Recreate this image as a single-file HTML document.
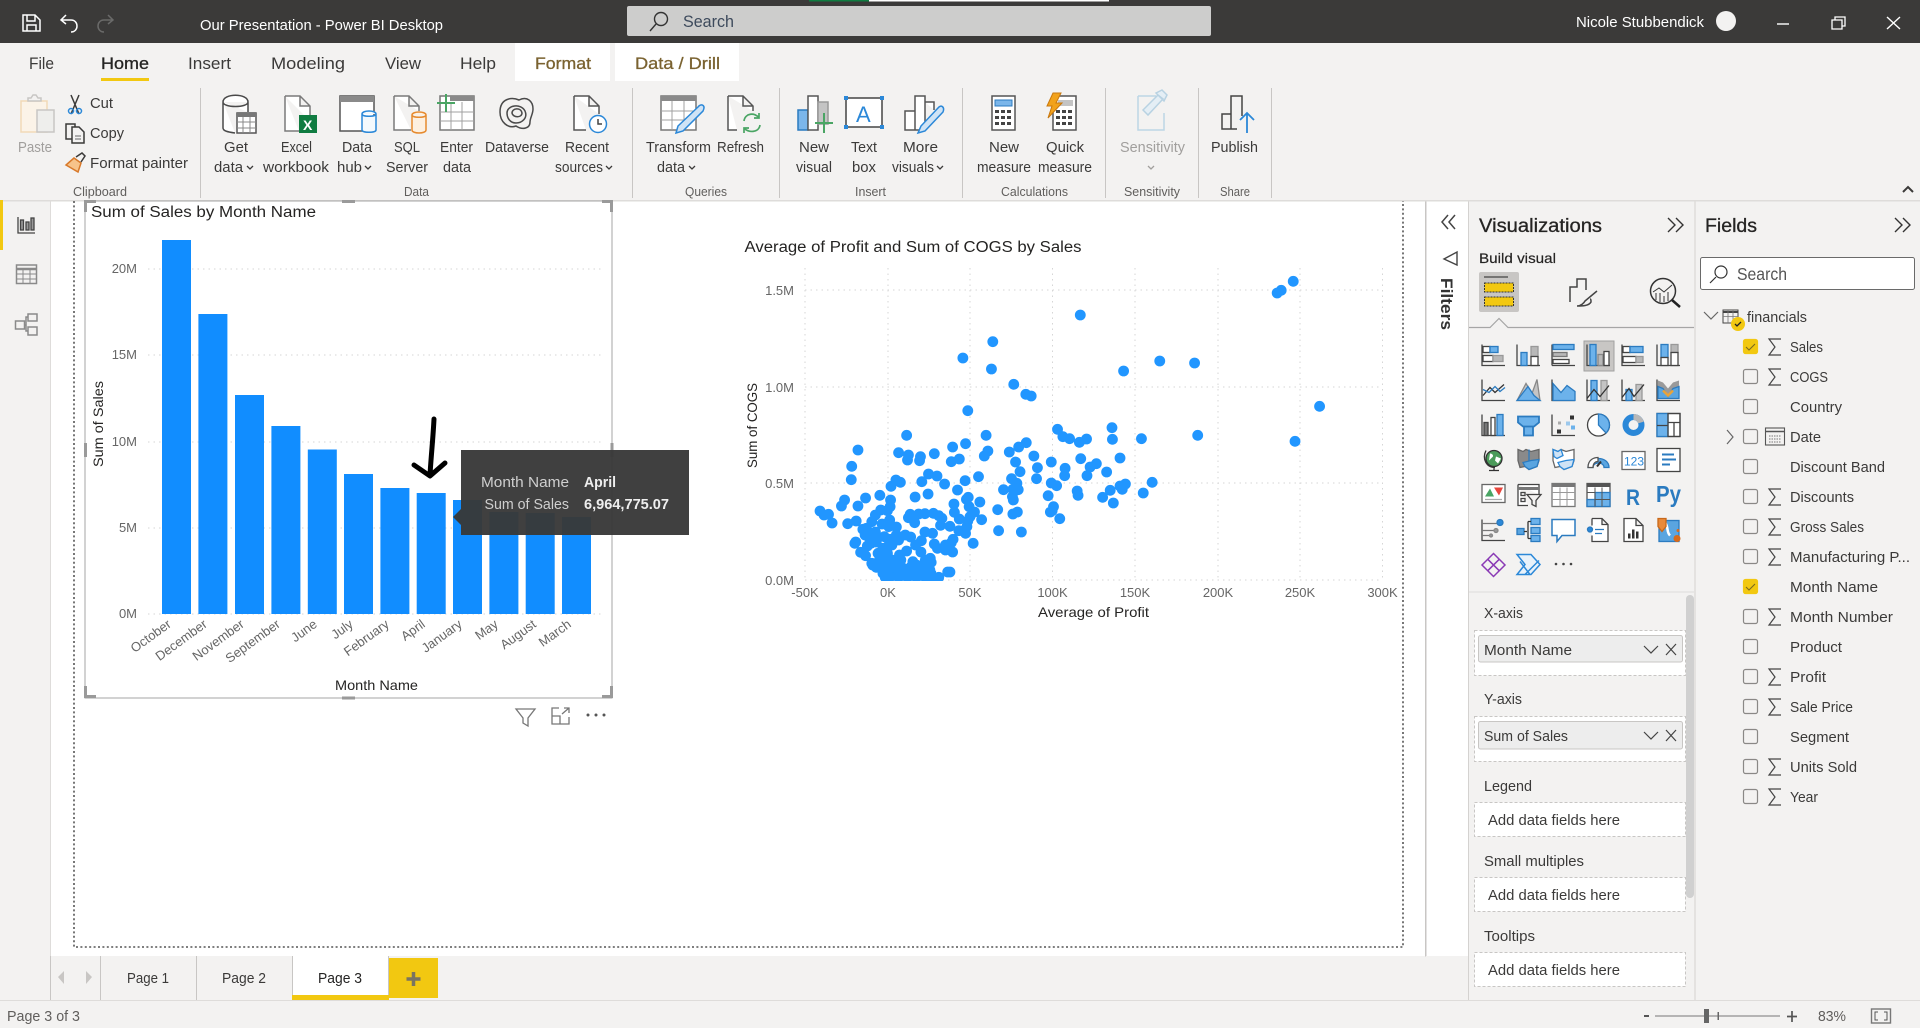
<!DOCTYPE html>
<html><head><meta charset="utf-8"><title>Our Presentation - Power BI Desktop</title>
<style>
html,body{margin:0;padding:0;background:#fff;width:1920px;height:1028px;overflow:hidden}
svg{display:block;font-family:"Liberation Sans",sans-serif}
.r{font-size:15px;fill:#3b3a39}
.g{font-size:13px;fill:#605e5c}
.tab{font-size:17px;fill:#3b3a39}
.f{font-size:15px;fill:#3b3a39}
.a{font-size:13px;fill:#666}
.d{font-size:15px;fill:#252423}
.ln{fill:none;stroke:#404040;stroke-width:1.5}
.gr{stroke:#d6d6d6;stroke-width:1;stroke-dasharray:1.5 4;fill:none}
.h{fill:#9a9a9a}
.cb{fill:#f3f2f1;stroke:#8a8886;stroke-width:1.2}
</style></head><body>
<svg width="1920" height="1028" viewBox="0 0 1920 1028" xmlns="http://www.w3.org/2000/svg">
<rect width="1920" height="1028" fill="#fff"/>
<!-- title bar -->
<rect width="1920" height="43" fill="#3b3a39"/>
<rect x="809" width="60" height="1.5" fill="#107c41"/><rect x="869" width="240" height="1.5" fill="#fff"/>
<g fill="none" stroke="#fff" stroke-width="1.5">
<path d="M23 15h12l5 5v11H23zM27 15v6h8v-6M27 31v-6h9v6"/>
<path d="M66 15l-5 5 5 4M61 20h10c8 0 8 12 0 12" />
<path d="M108 15l5 5-5 4M113 20h-9c-8 0-8 12 0 12" stroke="#6a6a69"/>
</g>
<text x="200" y="30" font-size="15" fill="#fff" textLength="243" lengthAdjust="spacingAndGlyphs">Our Presentation - Power BI Desktop</text>
<rect x="627" y="6" width="584" height="30" rx="2" fill="#cdcdcc"/>
<circle cx="661" cy="19" r="6.5" fill="none" stroke="#333" stroke-width="1.4"/><path d="M656 24l-6 7" stroke="#333" stroke-width="1.4"/>
<text x="683" y="27" font-size="17" fill="#3d4a5c" textLength="51" lengthAdjust="spacingAndGlyphs">Search</text>
<text x="1576" y="27" font-size="15" fill="#fff" textLength="128" lengthAdjust="spacingAndGlyphs">Nicole Stubbendick</text>
<circle cx="1726" cy="21" r="10" fill="#f3f2f1"/>
<path d="M1777 24h12" stroke="#fff" stroke-width="1.4"/>
<path d="M1835 20v-3h10v9h-3M1832 20h10v9h-10z" fill="none" stroke="#fff" stroke-width="1.3"/>
<path d="M1887 17l13 12M1900 17l-13 12" stroke="#fff" stroke-width="1.4"/>
<!-- ribbon -->
<rect y="43" width="1920" height="157" fill="#f3f2f1"/>
<rect y="200" width="1920" height="1.5" fill="#dedcda"/>
<rect x="515" y="43" width="95" height="38" fill="#fff"/>
<rect x="615" y="43" width="124" height="38" fill="#fff"/>
<text class="tab" x="29" y="69" textLength="25" lengthAdjust="spacingAndGlyphs">File</text>
<text class="tab" x="101" y="69" textLength="48" lengthAdjust="spacingAndGlyphs" style="fill:#252423;stroke:#252423;stroke-width:.3">Home</text>
<rect x="101" y="78" width="48" height="3" fill="#f2c811"/>
<text class="tab" x="188" y="69" textLength="43" lengthAdjust="spacingAndGlyphs">Insert</text>
<text class="tab" x="271" y="69" textLength="74" lengthAdjust="spacingAndGlyphs">Modeling</text>
<text class="tab" x="385" y="69" textLength="36" lengthAdjust="spacingAndGlyphs">View</text>
<text class="tab" x="460" y="69" textLength="36" lengthAdjust="spacingAndGlyphs">Help</text>
<text class="tab" x="535" y="69" textLength="56" lengthAdjust="spacingAndGlyphs" style="fill:#7a6230;stroke:#7a6230;stroke-width:.3">Format</text>
<text class="tab" x="635" y="69" textLength="85" lengthAdjust="spacingAndGlyphs" style="fill:#7a6230;stroke:#7a6230;stroke-width:.3">Data / Drill</text>
<g fill="#c8c6c4"><rect x="200" y="88" width="1" height="110"/><rect x="632" y="88" width="1" height="110"/><rect x="779" y="88" width="1" height="110"/><rect x="962" y="88" width="1" height="110"/><rect x="1105" y="88" width="1" height="110"/><rect x="1198" y="88" width="1" height="110"/><rect x="1271" y="88" width="1" height="110"/></g>
<!-- ribbon labels -->
<g>
<text class="r" x="18" y="152" textLength="34" lengthAdjust="spacingAndGlyphs" style="fill:#a19f9d">Paste</text>
<text class="r" x="90" y="108" textLength="23" lengthAdjust="spacingAndGlyphs">Cut</text>
<text class="r" x="90" y="138" textLength="34" lengthAdjust="spacingAndGlyphs">Copy</text>
<text class="r" x="90" y="168" textLength="98" lengthAdjust="spacingAndGlyphs">Format painter</text>
<text class="r" x="224" y="152" textLength="24" lengthAdjust="spacingAndGlyphs">Get</text>
<text class="r" x="214" y="172" textLength="29" lengthAdjust="spacingAndGlyphs">data</text>
<text class="r" x="281" y="152" textLength="31" lengthAdjust="spacingAndGlyphs">Excel</text>
<text class="r" x="263" y="172" textLength="66" lengthAdjust="spacingAndGlyphs">workbook</text>
<text class="r" x="342" y="152" textLength="30" lengthAdjust="spacingAndGlyphs">Data</text>
<text class="r" x="337" y="172" textLength="25" lengthAdjust="spacingAndGlyphs">hub</text>
<text class="r" x="394" y="152" textLength="26" lengthAdjust="spacingAndGlyphs">SQL</text>
<text class="r" x="386" y="172" textLength="42" lengthAdjust="spacingAndGlyphs">Server</text>
<text class="r" x="440" y="152" textLength="33" lengthAdjust="spacingAndGlyphs">Enter</text>
<text class="r" x="443" y="172" textLength="28" lengthAdjust="spacingAndGlyphs">data</text>
<text class="r" x="485" y="152" textLength="64" lengthAdjust="spacingAndGlyphs">Dataverse</text>
<text class="r" x="565" y="152" textLength="44" lengthAdjust="spacingAndGlyphs">Recent</text>
<text class="r" x="555" y="172" textLength="48" lengthAdjust="spacingAndGlyphs">sources</text>
<text class="r" x="646" y="152" textLength="65" lengthAdjust="spacingAndGlyphs">Transform</text>
<text class="r" x="657" y="172" textLength="28" lengthAdjust="spacingAndGlyphs">data</text>
<text class="r" x="717" y="152" textLength="47" lengthAdjust="spacingAndGlyphs">Refresh</text>
<text class="r" x="799" y="152" textLength="30" lengthAdjust="spacingAndGlyphs">New</text>
<text class="r" x="796" y="172" textLength="36" lengthAdjust="spacingAndGlyphs">visual</text>
<text class="r" x="851" y="152" textLength="26" lengthAdjust="spacingAndGlyphs">Text</text>
<text class="r" x="852" y="172" textLength="24" lengthAdjust="spacingAndGlyphs">box</text>
<text class="r" x="903" y="152" textLength="35" lengthAdjust="spacingAndGlyphs">More</text>
<text class="r" x="892" y="172" textLength="42" lengthAdjust="spacingAndGlyphs">visuals</text>
<text class="r" x="989" y="152" textLength="30" lengthAdjust="spacingAndGlyphs">New</text>
<text class="r" x="977" y="172" textLength="54" lengthAdjust="spacingAndGlyphs">measure</text>
<text class="r" x="1046" y="152" textLength="38" lengthAdjust="spacingAndGlyphs">Quick</text>
<text class="r" x="1038" y="172" textLength="54" lengthAdjust="spacingAndGlyphs">measure</text>
<text class="r" x="1120" y="152" textLength="65" lengthAdjust="spacingAndGlyphs" style="fill:#a19f9d">Sensitivity</text>
<text class="r" x="1211" y="152" textLength="47" lengthAdjust="spacingAndGlyphs">Publish</text>
<g class="g">
<text x="73" y="196" textLength="54" lengthAdjust="spacingAndGlyphs">Clipboard</text>
<text x="404" y="196" textLength="25" lengthAdjust="spacingAndGlyphs">Data</text>
<text x="685" y="196" textLength="42" lengthAdjust="spacingAndGlyphs">Queries</text>
<text x="855" y="196" textLength="31" lengthAdjust="spacingAndGlyphs">Insert</text>
<text x="1001" y="196" textLength="67" lengthAdjust="spacingAndGlyphs">Calculations</text>
<text x="1124" y="196" textLength="56" lengthAdjust="spacingAndGlyphs">Sensitivity</text>
<text x="1220" y="196" textLength="30" lengthAdjust="spacingAndGlyphs">Share</text>
</g>
<g fill="none" stroke="#3b3a39" stroke-width="1.3">
<path d="M247 166l3 3 3-3M365 166l3 3 3-3M606 166l3 3 3-3M689 166l3 3 3-3M937 166l3 3 3-3"/>
<path d="M1148 166l3 3 3-3" stroke="#a19f9d"/>
</g>
<path d="M1903 192l5-5 5 5" fill="none" stroke="#3b3a39" stroke-width="2"/>
</g>
<!-- ribbon icons -->
<g fill="none" stroke-width="1.5">
<!-- paste -->
<rect x="21" y="101" width="26" height="31" fill="#fbf3e8" stroke="#f1d9b8"/><path d="M28 101v-3h3l2-3h3l2 3h3v3z" fill="#f3f2f1" stroke="#c8c6c4"/><rect x="37" y="110" width="17" height="22" fill="#eeeeec" stroke="#c8c6c4"/>
<!-- cut -->
<path d="M71 95l8 19M79 95l-8 19" stroke="#3b3a39"/><circle cx="71" cy="110" r="2.5" stroke="#2b88d8" transform="translate(0 1)"/><circle cx="79" cy="110" r="2.5" stroke="#2b88d8" transform="translate(0 1)"/>
<!-- copy -->
<rect x="66" y="124" width="9" height="15" stroke="#3b3a39"/><path d="M72 127h7l5 5v11H72z" fill="#f3f2f1" stroke="#3b3a39"/><path d="M75 136h6M75 139h6" stroke="#666" stroke-width="1"/>
<!-- painter -->
<path d="M66 165l12 7 3-9-7-5z" fill="#f7c38a" stroke="#d8792a"/><path d="M76 157l6-4 3 3-4 6" stroke="#3b3a39"/>
<!-- get data -->
<path d="M223 102c0-9 25-9 25 0v10M223 102v26c0 3 5 4 12 5M223 102c0 6 25 6 25 0" stroke="#4a4a4a" fill="#fff"/>
<rect x="237" y="113" width="19" height="20" fill="#fff" stroke="#555"/><rect x="237" y="113" width="19" height="4" fill="#777" stroke="none"/><path d="M237 122h19M237 128h19M243 117v16M250 117v16" stroke="#888" stroke-width="1"/>
<!-- excel -->
<path d="M285 96h15l10 10v15M299 131h-14V96M300 96v10h10" stroke="#7a7a7a" fill="#fff"/><rect x="299" y="115" width="18" height="18" fill="#107c41" stroke="none"/><text x="303" y="130" font-size="14" font-weight="bold" fill="#fff" stroke="none">X</text>
<!-- data hub -->
<rect x="340" y="96" width="34" height="35" fill="#fff" stroke="#555"/><rect x="340" y="96" width="34" height="6" fill="#8a8a8a" stroke="none"/><path d="M362 114c0-4 14-4 14 0v16c0 3-14 3-14 0zM362 114c0 3 14 3 14 0" fill="#f3f9fd" stroke="#2b88d8"/>
<!-- sql -->
<path d="M394 96h15l10 10v5M411 130h-17V96M409 96v10h10" stroke="#7a7a7a" fill="#fff"/><path d="M412 115c0-4 14-4 14 0v15c0 4-14 4-14 0zM412 115c0 3 14 3 14 0" fill="#fdf0e0" stroke="#e68a2e"/>
<!-- enter data -->
<rect x="440" y="96" width="34" height="34" fill="#fff" stroke="#777"/><rect x="450" y="96" width="24" height="5" fill="#8a8a8a" stroke="none"/><path d="M440 112h34M440 121h34M451 102v28M462 102v28" stroke="#a0a0a0" stroke-width="1"/><path d="M446 94v18M437 103h18" stroke="#4aa564" stroke-width="2"/>
<!-- dataverse -->
<path d="M500 112c0-14 12-15 19-12 8-4 14 1 14 9 0 5-3 9-3 13 0 7-8 8-14 4-8 3-16-4-16-14zM507 113c0-8 14-10 18-2 3 7-3 12-9 12-6 0-9-5-9-10zM512 113c0-5 9-6 10 0 0 5-9 5-10 0z" stroke="#4a4a4a"/>
<!-- recent -->
<path d="M574 96h15l10 10v8M586 130h-12V96M589 96v10h10" stroke="#555" fill="#fff"/><circle cx="598" cy="124" r="8.5" fill="#fff" stroke="#2b88d8"/><path d="M598 119v5h4" stroke="#444"/>
<!-- transform -->
<rect x="661" y="96" width="35" height="34" fill="#fff" stroke="#777"/><rect x="661" y="96" width="35" height="5" fill="#8a8a8a" stroke="none"/><path d="M661 111h35M661 120h35M672 101v29M684 101v29" stroke="#a0a0a0" stroke-width="1"/><path d="M698 107l-20 19-2 7 7-2 20-20c3-6-2-8-5-4z" fill="#cfe3f5" stroke="#2b88d8"/>
<!-- refresh -->
<path d="M728 96h15l10 10v5M737 130h-9V96M743 96v10h10" stroke="#555" fill="#fff"/><path d="M744 121c1-8 11-9 15-3M760 125c-1 8-12 8-16 3M759 113v5h-5M744 133v-5h5" stroke="#4aa564" stroke-width="1.7"/>
<!-- new visual -->
<rect x="798" y="110" width="10" height="20" fill="#7bb6ea" stroke="#2b7bc0"/><rect x="808" y="96" width="10" height="34" fill="#fff" stroke="#555"/><rect x="818" y="102" width="10" height="22" fill="#c4c4c4" stroke="#999"/><path d="M824 113v20M815 123h18" stroke="#4aa564" stroke-width="2"/>
<!-- textbox -->
<rect x="846" y="98" width="36" height="29" fill="#fff" stroke="#444"/><g fill="#2b88d8" stroke="none"><rect x="844" y="96" width="4" height="4"/><rect x="880" y="96" width="4" height="4"/><rect x="844" y="125" width="4" height="4"/><rect x="880" y="125" width="4" height="4"/></g><text x="856" y="122" font-size="22" fill="#2b88d8" stroke="none">A</text>
<!-- more visuals -->
<path d="M905 111h10v19h-10zM915 96h10v34h-10zM925 102h9v8" stroke="#555" fill="#fff"/><path d="M938 108l-17 18-3 7 7-2 18-19c2-5-2-8-5-4z" fill="#cfe3f5" stroke="#2b88d8"/>
<!-- new measure -->
<rect x="992" y="96" width="23" height="34" fill="#fff" stroke="#555"/><rect x="995" y="100" width="17" height="6" fill="#7bb6ea" stroke="#2b7bc0" stroke-width="1"/><g fill="#444" stroke="none"><rect x="995" y="110" width="4" height="3"/><rect x="1001" y="110" width="4" height="3"/><rect x="1007" y="110" width="4" height="3"/><rect x="995" y="116" width="4" height="3"/><rect x="1001" y="116" width="4" height="3"/><rect x="1007" y="116" width="4" height="3"/><rect x="995" y="122" width="4" height="3"/><rect x="1001" y="122" width="4" height="3"/><rect x="1007" y="122" width="4" height="3"/></g>
<!-- quick measure -->
<rect x="1053" y="96" width="23" height="34" fill="#fff" stroke="#555"/><rect x="1058" y="100" width="15" height="6" fill="#c4c4c4" stroke="none"/><g fill="#444" stroke="none"><rect x="1056" y="110" width="4" height="3"/><rect x="1062" y="110" width="4" height="3"/><rect x="1068" y="110" width="4" height="3"/><rect x="1056" y="116" width="4" height="3"/><rect x="1062" y="116" width="4" height="3"/><rect x="1068" y="116" width="4" height="3"/><rect x="1056" y="122" width="4" height="3"/><rect x="1062" y="122" width="4" height="3"/><rect x="1068" y="122" width="4" height="3"/></g><path d="M1053 93h8l-5 10h6l-14 15 4-12h-5z" fill="#f2a21b" stroke="#c8780f" stroke-width="1"/>
<!-- sensitivity -->
<path d="M1138 96h18M1164 113v17h-26V96" stroke="#bcd6e6" fill="#f3f2f1"/><path d="M1143 110l15-15 5 4-15 16z M1156 93l6-3 5 5-3 6z" stroke="#b8d2e2" fill="#e4eef5"/>
<!-- publish -->
<path d="M1222 129v-15h9v15zM1231 114v-18h11v20M1222 129h15" stroke="#444" fill="#f3f2f1"/><path d="M1247 133v-20M1240 120l7-7 7 7" stroke="#2b88d8" stroke-width="1.8"/>
</g>
<!-- left rail -->
<rect y="201.5" width="50" height="798.500" fill="#f3f2f1"/><rect x="50" y="201.5" width="1" height="799" fill="#dedcda"/>
<rect y="200" width="3" height="50" fill="#f2c811"/>
<g fill="none" stroke="#444" stroke-width="1.3"><path d="M18 217v16h17"/><rect x="20.500" y="220" width="3" height="10" fill="#999"/><rect x="26" y="222" width="3" height="8" fill="#999"/><rect x="31" y="218" width="3" height="12" fill="#999"/></g>
<g fill="none" stroke="#8a8a8a" stroke-width="1.5"><rect x="16.500" y="265" width="20" height="18.500"/><path d="M16 269h21" stroke-width="2.5"/><path d="M16 274h21M16 279h21M23 269v15M30 269v15" stroke-width="1"/><rect x="28" y="314" width="9" height="7"/><rect x="28" y="327" width="9" height="8"/><rect x="15.500" y="321" width="9" height="8"/><path d="M24 325h2V317h2M26 325v6h2"/></g>
<!-- page border -->
<path d="M74 201V947H1403V201" fill="none" stroke="#555" stroke-width="1.6" stroke-dasharray="2 2.4"/>
<!-- bar chart -->
<text x="91" y="217" font-size="15.500" fill="#252423" textLength="225" lengthAdjust="spacingAndGlyphs">Sum of Sales by Month Name</text>
<g class="gr"><path d="M148 269H603M148 355H603M148 442H603M148 528H603M148 614H603"/></g>
<g class="a" text-anchor="end"><text x="137" y="273">20M</text><text x="137" y="359">15M</text><text x="137" y="446">10M</text><text x="137" y="532">5M</text><text x="137" y="618">0M</text></g>
<g fill="#118dff">
<rect x="162" y="240" width="29" height="374"/><rect x="198.400" y="314" width="29" height="300"/><rect x="235" y="395" width="29" height="219"/><rect x="271.400" y="426" width="29" height="188"/><rect x="307.800" y="449.500" width="29" height="164.500"/><rect x="344" y="474" width="29" height="140"/><rect x="380.400" y="488" width="29" height="126"/><rect x="416.700" y="493" width="29" height="121"/><rect x="453" y="500" width="29" height="114"/><rect x="489.400" y="512" width="29" height="102"/><rect x="525.700" y="513" width="29" height="101"/><rect x="562" y="517" width="29" height="97"/>
</g>
<g class="a" text-anchor="end">
<text transform="translate(172 626) rotate(-36)">October</text><text transform="translate(208 626) rotate(-36)">December</text><text transform="translate(245 626) rotate(-36)">November</text><text transform="translate(281 626) rotate(-36)">September</text><text transform="translate(318 626) rotate(-36)">June</text><text transform="translate(354 626) rotate(-36)">July</text><text transform="translate(390 626) rotate(-36)">February</text><text transform="translate(426 626) rotate(-36)">April</text><text transform="translate(463 626) rotate(-36)">January</text><text transform="translate(499 626) rotate(-36)">May</text><text transform="translate(537 626) rotate(-36)">August</text><text transform="translate(572 626) rotate(-36)">March</text>
</g>
<text transform="translate(103 467) rotate(-90)" class="d" textLength="86" lengthAdjust="spacingAndGlyphs" style="font-size:14px">Sum of Sales</text>
<text class="d" x="335" y="690" textLength="83" lengthAdjust="spacingAndGlyphs" style="font-size:14px">Month Name</text>
<!-- selection -->
<rect x="85" y="201" width="527" height="497" fill="none" stroke="#a6a6a6" stroke-width="1"/>
<g class="h">
<path d="M84 200h12v3h-9v9h-3zM602 200h11v12h-3v-9h-8zM84 686h3v9h9v3H84zM613 686v12h-11v-3h8v-9z"/>
<rect x="342" y="200" width="13" height="3"/><rect x="342" y="696.500" width="13" height="3"/><rect x="84" y="443" width="3" height="14"/><rect x="610.500" y="443" width="3" height="14"/>
</g>
<!-- arrow -->
<path d="M434 419c-1 20-3 38-4 56M414 465l16 11 15-13" fill="none" stroke="#000" stroke-width="5" stroke-linecap="round" stroke-linejoin="round"/>
<!-- tooltip -->
<path d="M461 450H689V535H461V525L453 517L461 509Z" fill="#383838" fill-opacity=".96"/>
<text x="481" y="487" font-size="14.500" fill="#cfcfcf" textLength="88" lengthAdjust="spacingAndGlyphs">Month Name</text>
<text x="484.500" y="509" font-size="14.500" fill="#cfcfcf" textLength="84.500" lengthAdjust="spacingAndGlyphs">Sum of Sales</text>
<text x="584" y="487" font-size="14.500" font-weight="bold" fill="#eee" textLength="32" lengthAdjust="spacingAndGlyphs">April</text>
<text x="584" y="509" font-size="14.500" font-weight="bold" fill="#eee" textLength="85" lengthAdjust="spacingAndGlyphs">6,964,775.07</text>
<!-- visual header -->
<path d="M516 709h19l-7 9v8l-5-3v-5z" fill="none" stroke="#777" stroke-width="1.3"/>
<path d="M559 708h-7v16h17v-7M552 716h8v8M562 714l7-6M564 708h5v5" fill="none" stroke="#777" stroke-width="1.3"/>
<g fill="#555"><circle cx="588" cy="715" r="1.500"/><circle cx="596" cy="715" r="1.500"/><circle cx="604" cy="715" r="1.500"/></g>
<!-- scatter -->
<text x="744.500" y="252" font-size="15.500" fill="#252423" textLength="337" lengthAdjust="spacingAndGlyphs">Average of Profit and Sum of COGS by Sales</text>
<g class="gr"><path d="M805 290H1382M805 387H1382M805 483H1382M805 580H1382M805 268V580M888 268V580M970 268V580M1052.500 268V580M1135 268V580M1218 268V580M1300 268V580M1382.500 268V580"/></g>
<g class="a" text-anchor="end"><text x="794" y="295">1.5M</text><text x="794" y="392">1.0M</text><text x="794" y="488">0.5M</text><text x="794" y="585">0.0M</text></g>
<g class="a" text-anchor="middle"><text x="805" y="597">-50K</text><text x="888" y="597">0K</text><text x="970" y="597">50K</text><text x="1052.500" y="597">100K</text><text x="1135" y="597">150K</text><text x="1218" y="597">200K</text><text x="1300" y="597">250K</text><text x="1382.500" y="597">300K</text></g>
<text transform="translate(757 468) rotate(-90)" class="d" textLength="85" lengthAdjust="spacingAndGlyphs" style="font-size:14px">Sum of COGS</text>
<text class="d" x="1038" y="617" textLength="111" lengthAdjust="spacingAndGlyphs" style="font-size:14px">Average of Profit</text>
<svg x="0" y="0" width="1920" height="581" viewBox="0 0 1920 581">
<g transform="translate(720 220) scale(.44643 .33333)">
<rect x="366" y="1052" width="118" height="30" fill="#2196ff"/>
<path fill="none" stroke="#2196ff" stroke-width="10.800" stroke-linecap="round" vector-effect="non-scaling-stroke" d="M1284 184h.1M1257 211h.1M1248 219h.1M807 285h.1M611 365h.1M544 414h.1M608 447h.1M985 423h.1M1063 429h.1M904 453h.1M658 493h.1M685 523h.1M697 528h.1M1343 559h.1M555 572h.1M878 623h.1M756 628h.1M768 650h.1M783 656h.1M821 657h.1M805 667h.1M879 658h.1M944 656h.1M1070 646h.1M1288 664h.1M418 646h.1M596 646h.1M550 671h.1M521 681h.1M309 690h.1M400 698h.1M422 705h.1M449 710h.1M480 701h.1M600 693h.1M592 708h.1M648 696h.1M669 681h.1M686 668h.1M703 708h.1M808 716h.1M896 714h.1M843 731h.1M829 741h.1M742 726h.1M662 726h.1M536 717h.1M518 725h.1M420 720h.1M447 722h.1M295 739h.1M294 779h.1M711 743h.1M773 745h.1M672 755h.1M866 756h.1M467 762h.1M486 768h.1M579 770h.1M653 776h.1M709 776h.1M772 767h.1M822 767h.1M549 782h.1M452 785h.1M394 780h.1M404 787h.1M383 799h.1M503 792h.1M532 810h.1M665 790h.1M742 789h.1M754 797h.1M800 813h.1M802 826h.1M896 798h.1M908 792h.1M901 808h.1M874 811h.1M968 787h.1M948 819h.1M857 832h.1M881 849h.1M735 827h.1M635 809h.1M656 808h.1M668 809h.1M655 830h.1M657 840h.1M358 826h.1M326 834h.1M279 840h.1M272 858h.1M309 858h.1M382 840h.1M437 831h.1M466 822h.1M556 832h.1M552 838h.1M582 846h.1M524 852h.1M558 860h.1M381 860h.1M360 870h.1M375 872h.1M224 873h.1M233 885h.1M243 883h.1M251 909h.1M286 911h.1M305 903h.1M348 885h.1M340 905h.1M622 869h.1M666 876h.1M656 882h.1M740 876h.1M747 860h.1M744 872h.1M761 896h.1M570 876h.1M525 877h.1M536 897h.1M560 890h.1M586 899h.1M555 903h.1M426 883h.1M422 893h.1M445 882h.1M459 881h.1M478 880h.1M490 887h.1M497 895h.1M494 916h.1M436 908h.1M363 912h.1M380 900h.1M378 920h.1M395 921h.1M515 919h.1M553 920h.1M624 932h.1M675 936h.1M535 932h.1M550 940h.1M459 936h.1M476 940h.1M320 928h.1M348 936h.1M325 945h.1M427 951h.1M403 951h.1M381 958h.1M451 962h.1M522 958h.1M518 968h.1M567 970h.1M304 966h.1M302 970h.1M350 966h.1M338 970h.1M330 978h.1M375 980h.1M438 975h.1M480 972h.1M487 985h.1M505 990h.1M521 996h.1M315 997h.1M326 1007h.1M354 1000h.1M372 990h.1M418 993h.1M450 996h.1M342 1035h.1M350 1042h.1M358 1015h.1M380 1020h.1M405 1020h.1M432 1025h.1M460 1020h.1M471 1015h.1M473 1027h.1M340 1030h.1M510 1056h.1M515 1056h.1M370 1040h.1M390 1040h.1M410 1045h.1M450 1050h.1M470 1050h.1M365 1060h.1M375 1055h.1M400 1055h.1M420 1055h.1M440 1058h.1M460 1060h.1M490 1072h.1M380 1072h.1M400 1072h.1M420 1072h.1M440 1072h.1M460 1072h.1M475 1072h.1M370 1072h.1M385 1020h.1M360 1030h.1M375 1000h.1M395 1030h.1M400 960h.1M368 950h.1M365 985h.1M385 975h.1M402 1005h.1M375 1030h.1M428 1040h.1M440 1035h.1M455 1035h.1M345 945h.1M335 955h.1M328 925h.1M395 945h.1M415 945h.1M505 975h.1"/>
</g></svg>
<!-- tabs row -->
<rect x="51" y="956" width="1375" height="44" fill="#f3f2f1"/>
<rect y="1000" width="1920" height="28" fill="#f3f2f1"/><rect y="1000" width="1920" height="1" fill="#dedcda"/>
<path d="M64 971l-6 6 6 7zM86 971l6 6-6 7z" fill="#c8c6c4"/>
<g fill="#c8c6c4"><rect x="50" y="956" width="1" height="44"/><rect x="100" y="956" width="1" height="44"/><rect x="196" y="956" width="1" height="44"/><rect x="292" y="956" width="1" height="44"/><rect x="388" y="956" width="1" height="44"/></g>
<rect x="293" y="956" width="95" height="39" fill="#fff"/><rect x="292" y="995" width="97" height="5" fill="#f2c811"/>
<rect x="389" y="958" width="49" height="40" fill="#f2c811"/><path d="M413.500 972v14M406.500 979h14" stroke="#7a7460" stroke-width="3.500"/>
<text x="127" y="983" font-size="15" fill="#3b3a39" textLength="42" lengthAdjust="spacingAndGlyphs">Page 1</text>
<text x="222" y="983" font-size="15" fill="#3b3a39" textLength="44" lengthAdjust="spacingAndGlyphs">Page 2</text>
<text x="318" y="983" font-size="15" fill="#252423" textLength="44" lengthAdjust="spacingAndGlyphs">Page 3</text>
<text x="7" y="1021" font-size="15" fill="#605e5c" textLength="73" lengthAdjust="spacingAndGlyphs">Page 3 of 3</text>
<!-- zoom controls -->
<path d="M1644 1016h5" stroke="#555" stroke-width="2"/><path d="M1655 1016h125" stroke="#777"/><rect x="1704" y="1009" width="5" height="14" fill="#666"/><rect x="1717.500" y="1012" width="1.500" height="8" fill="#666"/><path d="M1792 1011v11M1787 1016.500h10" stroke="#555" stroke-width="1.700"/>
<text x="1818" y="1021" font-size="15" fill="#605e5c" textLength="28" lengthAdjust="spacingAndGlyphs">83%</text>
<rect x="1871.500" y="1009" width="19" height="14" fill="none" stroke="#777" stroke-width="1.400"/><path d="M1878 1012h-3v8h3M1884 1012h3v8h-3" fill="none" stroke="#555"/>
<!-- filters pane -->
<rect x="1426" y="201.500" width="42" height="798.500" fill="#fff"/>
<rect x="1425" y="201.500" width="1.500" height="755" fill="#c8c6c4"/><rect x="1426" y="956" width="42" height="44" fill="#f3f2f1"/>
<path d="M1448 215l-6 7 6 7M1455 215l-6 7 6 7" fill="none" stroke="#444" stroke-width="1.500"/>
<path d="M1457 252v13l-13-6z" fill="none" stroke="#444" stroke-width="1.400"/>
<text transform="translate(1441 278) rotate(90)" font-size="17" font-weight="bold" fill="#333" textLength="52" lengthAdjust="spacingAndGlyphs">Filters</text>
<!-- visualizations pane -->
<rect x="1468" y="201.500" width="227" height="798.500" fill="#f3f2f1"/>
<rect x="1468" y="201.500" width="1" height="798.500" fill="#d4d2d0"/><rect x="1694.500" y="201.500" width="1" height="798.500" fill="#d4d2d0"/>
<text x="1479" y="232" font-size="19" fill="#252423" stroke="#252423" stroke-width=".3" textLength="123" lengthAdjust="spacingAndGlyphs">Visualizations</text>
<path d="M1668 218l7 7-7 7M1676 218l7 7-7 7" fill="none" stroke="#333" stroke-width="1.400"/>
<text x="1479" y="263" font-size="14" fill="#252423" stroke="#252423" stroke-width=".2" textLength="77" lengthAdjust="spacingAndGlyphs">Build visual</text>
<rect x="1479" y="272" width="40" height="40" rx="2" fill="#c8c6c4"/><path d="M1484 277h24" stroke="#222"/><rect x="1484.500" y="283" width="29" height="9" fill="#f2c811" stroke="#333" stroke-dasharray="2 1"/><rect x="1484.500" y="297" width="29" height="9" fill="#f2c811" stroke="#333" stroke-dasharray="2 1"/>
<path d="M1570 302v-15h7v-8h9v11" fill="none" stroke="#444" stroke-width="1.500"/><path d="M1597 291l-12 10c-1 2-4 5-8 5 5 0 12 0 14-4 0-2 0-3-1-3" fill="none" stroke="#444" stroke-width="1.500"/>
<circle cx="1663" cy="291" r="12.500" fill="none" stroke="#333" stroke-width="1.500"/><path d="M1656 300v-7M1660 302v-9M1664 302v-6M1668 301v-9M1653 292l6-4 5 4 8-7" fill="none" stroke="#333"/><path d="M1672 300l8 7" stroke="#222" stroke-width="2.500"/>
<path d="M1469 327.500h21l9-9 9 9h186" fill="none" stroke="#a6a6a6" stroke-width="1.200"/>
<rect x="1584" y="341" width="30" height="30" fill="#c8c6c4" stroke="#a0a0a0"/>
<!-- viz icons -->
<g fill="none" stroke="#444" stroke-width="1.300">
<g transform="translate(1482 343.500)"><path d="M0 1V22H23"/><rect x="1" y="3" width="7" height="6" fill="#fff"/><rect x="8" y="3" width="8" height="6" fill="#6cb2eb" stroke="#2b7bc0"/><rect x="1" y="12" width="10" height="6" fill="#fff"/><rect x="11" y="12" width="10" height="6" fill="#b8b8b8" stroke="#999"/></g>
<g transform="translate(1517 343.500)"><path d="M0 1V22H23"/><rect x="4" y="9" width="6" height="13" fill="#6cb2eb" stroke="#2b7bc0"/><rect x="14" y="3" width="7" height="10" fill="#b8b8b8" stroke="#999"/><rect x="14" y="13" width="7" height="9" fill="#fff"/></g>
<g transform="translate(1552 343.500)"><path d="M0 22H23M0 1V22"/><rect x="1" y="1" width="21" height="5" fill="#6cb2eb" stroke="#2b7bc0"/><rect x="1" y="9" width="14" height="4" fill="#b8b8b8" stroke="#777"/><rect x="1" y="16" width="16" height="4" fill="#fff"/></g>
<g transform="translate(1587 343.500)"><path d="M0 1V22H23"/><rect x="3" y="1" width="6" height="21" fill="#6cb2eb" stroke="#2b7bc0"/><rect x="11" y="11" width="5" height="11" fill="#b8b8b8" stroke="#888"/><rect x="17" y="8" width="5" height="14" fill="#fff"/></g>
<g transform="translate(1622 343.500)"><path d="M0 1V22H23"/><rect x="1" y="3" width="7" height="6" fill="#fff"/><rect x="8" y="3" width="13" height="6" fill="#6cb2eb" stroke="#2b7bc0"/><rect x="1" y="13" width="13" height="6" fill="#fff"/><rect x="14" y="13" width="7" height="6" fill="#b8b8b8" stroke="#999"/></g>
<g transform="translate(1657 343.500)"><path d="M0 1V22H23"/><rect x="4" y="1" width="7" height="13" fill="#6cb2eb" stroke="#2b7bc0"/><rect x="4" y="14" width="7" height="8" fill="#fff"/><rect x="14" y="1" width="7" height="8" fill="#b8b8b8" stroke="#999"/><rect x="14" y="9" width="7" height="13" fill="#fff"/></g>

<g transform="translate(1482 378.500)"><path d="M0 1V22H23"/><path d="M1 17l7-8 5 5 9-8" stroke="#333"/><path d="M1 11l6 3 6-6 5 5 5-4" stroke="#2b7bc0"/></g>
<g transform="translate(1517 378.500)"><path d="M0 22L9 5l6 10 5-14 3 21z" fill="#c4c4c4" stroke="#888"/><path d="M0 22l7-9 4-5 6 9 6 5z" fill="#6cb2eb" stroke="#2b7bc0"/></g>
<g transform="translate(1552 378.500)"><path d="M0 1V22H23"/><path d="M1 5l8 9 6-7 8 6v9H1z" fill="#6cb2eb" stroke="#2b7bc0"/></g>
<g transform="translate(1587 378.500)"><path d="M0 1V22H23"/><rect x="4" y="2" width="6" height="20" fill="#6cb2eb" stroke="#2b7bc0"/><rect x="14" y="2" width="6" height="20" fill="#c4c4c4" stroke="#999"/><path d="M0 20l7-9 6 7 9-11" stroke="#333"/></g>
<g transform="translate(1622 378.500)"><path d="M0 1V22H23"/><rect x="4" y="11" width="6" height="11" fill="#6cb2eb" stroke="#2b7bc0"/><rect x="14" y="6" width="6" height="16" fill="#c4c4c4" stroke="#999"/><path d="M0 19l7-9 5 8 10-12" stroke="#333"/></g>
<g transform="translate(1657 378.500)"><path d="M0 1V22H23"/><path d="M1 2l5 2 5 6 5-6 6-2v18H1z" fill="#9a9a9a" stroke="none"/><path d="M1 8l5 2 5 8 5-8 6-2v12H1z" fill="#5aa5e0" stroke="#2b7bc0"/><path d="M6 12l5 5 5-5" stroke="#e8a33a" stroke-width="2.500"/></g>

<g transform="translate(1482 413.500)"><path d="M0 1V22H23"/><rect x="2" y="9" width="4" height="13" fill="#777"/><rect x="9" y="4" width="4" height="18" fill="#fff"/><rect x="15" y="1" width="6" height="21" fill="#6cb2eb" stroke="#2b7bc0"/></g>
<g transform="translate(1517 413.500)"><path d="M1 3h21v6l-5 4H6L1 9zM7 13h9v9H7z" fill="#6cb2eb" stroke="#2b7bc0" stroke-width="1.800"/></g>
<g transform="translate(1552 413.500)"><path d="M0 1V22H23"/><g stroke="none"><rect x="18" y="2" width="4" height="4" fill="#333"/><rect x="5" y="16" width="4" height="4" fill="#333"/><rect x="14" y="8" width="4" height="4" fill="#9cc8ec"/><rect x="19" y="12" width="4" height="4" fill="#6cb2eb"/><rect x="6" y="8" width="3" height="3" fill="#aaa"/></g></g>
<g transform="translate(1587 413.500)"><circle cx="11.500" cy="11.500" r="11" fill="#fff" stroke="#444"/><path d="M11.500 11.500V.5A11 11 0 0 1 19 19.500z" fill="#6cb2eb" stroke="#2b7bc0"/></g>
<g transform="translate(1622 413.500)"><circle cx="11.500" cy="11.500" r="8" fill="none" stroke="#2b88d8" stroke-width="6"/><path d="M11.500 3.500A8 8 0 0 1 19 9" stroke="#b8b8b8" stroke-width="6"/></g>
<g transform="translate(1657 413.500)"><rect x="0" y="0" width="23" height="23" fill="#fff"/><rect x="0" y="0" width="11" height="23" fill="#6cb2eb" stroke="#2b7bc0"/><path d="M0 12h11M11 0h12v23H11zM11 9h12M17 9v14"/></g>

<g transform="translate(1482 448.500)"><circle cx="12" cy="10" r="8" fill="#4b9b5a" stroke="#333"/><path d="M8 5c3 0 4 3 2 4l-3 3zM14 8l5 2-3 5-3-3z" fill="#fff" stroke="none"/><path d="M4 2c-4 8 0 17 9 17M12 19v3M7 22h10" stroke="#333"/></g>
<g transform="translate(1517 448.500)"><path d="M1 1l5 2 3-2 5 2 8-2v11l-2 6-8 3-4-3-5 1-2-7z" fill="#8a8a8a" stroke="#666"/><path d="M6 14l8-2 8-1-2 7-8 3-4-3z" fill="#5aa5e0" stroke="#2b7bc0"/><path d="M12 1v12" stroke="#2b7bc0"/></g>
<g transform="translate(1552 448.500)"><path d="M1 1l5 2 3-2 5 2 8-2v11l-2 6-8 3-4-3-5 1-2-7z" fill="#fff" stroke="#666"/><path d="M1 1l5 2 3-2 2 6-6 3-3-2z" fill="#cfe3f5" stroke="#2b88d8"/><path d="M6 14l8-2 8-1-2 7-8 3-4-3z" fill="#cfe3f5" stroke="#2b88d8"/></g>
<g transform="translate(1587 448.500)"><path d="M1 19C1 7 22 7 22 19h-5c0-6-11-6-11 0z" fill="#5aa5e0" stroke="#2b7bc0"/><path d="M1 19C1 11 7 9 11 9v4c-3 0-5 2-5 6z" fill="#fff" stroke="#555"/><path d="M10 18l4-5" stroke="#333" stroke-width="2"/></g>
<g transform="translate(1622 448.500)"><rect x="0" y="3" width="23" height="18" fill="#fff" stroke="#666"/><text x="2" y="17" font-size="12" fill="#2b88d8" stroke="none">123</text></g>
<g transform="translate(1657 448.500)"><rect x="0" y="0" width="23" height="23" fill="#fff"/><path d="M5 6h12M5 11h14M5 16h8" stroke="#2b7bc0" stroke-width="2"/></g>

<g transform="translate(1482 483.500)"><rect x="0" y="1" width="23" height="18" fill="#fff" stroke="#666"/><path d="M3 13l5-8 4 8z" fill="#4aa564" stroke="none"/><path d="M12 4h9l-4 8z" fill="#e8453c" stroke="none"/><path d="M3 16h17" stroke="#aaa"/></g>
<g transform="translate(1517 483.500)"><path d="M1 1h21v10M11 22H1V1" fill="#fff"/><path d="M1 5h21" stroke-width="3" stroke="#777"/><rect x="4" y="9" width="4" height="3"/><rect x="4" y="15" width="4" height="3"/><path d="M10 11h14l-5 6v6l-4-2v-4z" fill="#f3f2f1" stroke="#444"/></g>
<g transform="translate(1552 483.500)"><rect x="0" y="0" width="23" height="23" fill="#fff" stroke="#777"/><path d="M0 2h23" stroke-width="3" stroke="#777"/><path d="M0 9h23M0 16h23M8 4v19M15 4v19" stroke="#999" stroke-width="1"/></g>
<g transform="translate(1587 483.500)"><rect x="0" y="0" width="23" height="23" fill="#fff" stroke="#555"/><path d="M0 2h23" stroke-width="3" stroke="#555"/><rect x="8" y="9" width="15" height="14" fill="#6cb2eb" stroke="#2b7bc0"/><rect x="0" y="16" width="8" height="7" fill="#6cb2eb" stroke="#2b7bc0"/><path d="M0 9h8M15 4v19M8 16h15M8 4v19" stroke="#555" stroke-width="1"/></g>
<text x="1626" y="505" font-size="22" font-weight="bold" fill="#2b7bc0" stroke="none" textLength="14" lengthAdjust="spacingAndGlyphs">R</text>
<text x="1656" y="502" font-size="23" font-weight="bold" fill="#2b7bc0" stroke="none" textLength="25" lengthAdjust="spacingAndGlyphs">Py</text>

<g transform="translate(1482 518.500)"><path d="M0 1V22H23"/><path d="M0 5h16M0 12h12M0 17h7" stroke="#777"/><circle cx="18" cy="4" r="3" fill="#2b88d8" stroke="#2b7bc0"/><circle cx="14" cy="12" r="2" fill="#999" stroke="#888"/><circle cx="9" cy="17" r="1.500" fill="#999" stroke="#888"/></g>
<g transform="translate(1517 518.500)"><rect x="0" y="10" width="7" height="6" fill="#5aa5e0" stroke="#2b7bc0"/><rect x="14" y="0" width="9" height="6" fill="#6cb2eb" stroke="#2b7bc0"/><rect x="14" y="9" width="9" height="6" fill="#6cb2eb" stroke="#2b7bc0"/><rect x="14" y="17" width="9" height="6" fill="#6cb2eb" stroke="#2b7bc0"/><path d="M7 13h3M11 3v17M11 3h3M11 20h3" stroke="#333"/></g>
<g transform="translate(1552 518.500)"><path d="M0 1h23v16H10l-5 6v-6H0z" fill="#fff" stroke="#2b7bc0" stroke-width="1.500"/></g>
<g transform="translate(1587 518.500)"><path d="M5 0h10l6 6v17H5v-6M5 7V0M15 0v6h6" fill="#fff"/><circle cx="3" cy="11" r="2.500" fill="#2b88d8" stroke="#2b7bc0"/><path d="M8 11h9M8 15h7" stroke="#2b7bc0"/></g>
<g transform="translate(1622 518.500)"><path d="M2 0h12l7 7v16H2zM14 0v7h7" fill="#fff"/><rect x="6" y="15" width="2.500" height="5" fill="#333" stroke="none"/><rect x="10" y="11" width="2.500" height="9" fill="#333" stroke="none"/><rect x="14" y="13" width="2.500" height="7" fill="#333" stroke="none"/></g>
<g transform="translate(1657 518.500)"><rect x="2" y="2" width="20" height="21" fill="#5aa5e0" stroke="#2b7bc0"/><path d="M8 4c4 5 1 9 5 13" stroke="#fff" stroke-width="2.500"/><path d="M1 0h8v8l-4 5-4-5z" fill="#e98a3a" stroke="#c8681a"/><circle cx="20" cy="20" r="3.500" fill="#d86a1a" stroke="none"/><circle cx="21" cy="12" r="1.500" fill="#d86a1a" stroke="none"/></g>

<g transform="translate(1482 553.500)" stroke="#8a3ab5" stroke-width="1.500"><path d="M11.500 0L23 11.500 11.500 23 0 11.500zM5.800 5.800L17.200 17.200M17.200 5.800L5.800 17.200"/></g>
<g transform="translate(1517 553.500)" stroke="#2b88d8" stroke-width="1.500"><path d="M0 1h14l9 10-9 10H0l8-10zM8 21l14-14M13 21L3 8" fill="#e8f2fa"/></g>
<g fill="#444" stroke="none"><circle cx="1556" cy="564" r="1.300"/><circle cx="1563.500" cy="564" r="1.300"/><circle cx="1571" cy="564" r="1.300"/></g>
</g>
<rect x="1469" y="591.500" width="225" height="1" fill="#dedcda"/>
<rect x="1686" y="595" width="8" height="303" rx="4" fill="#d0d0d0"/>
<!-- wells -->
<g fill="#fff" stroke="#c8c6c4" stroke-dasharray="3 2">
<rect x="1474.500" y="630.500" width="211" height="45"/><rect x="1474.500" y="716.500" width="211" height="45"/><rect x="1474.500" y="802.500" width="211" height="34"/><rect x="1474.500" y="877.500" width="211" height="34"/><rect x="1474.500" y="952.500" width="211" height="34"/>
</g>
<rect x="1478.500" y="635.500" width="204" height="26.500" rx="2" fill="#ededed" stroke="#c8c6c4"/>
<rect x="1478.500" y="721.500" width="204" height="27.500" rx="2" fill="#ededed" stroke="#c8c6c4"/>
<g fill="none" stroke="#444" stroke-width="1.200"><path d="M1644 646l7 7 7-7M1666 644l10 11M1676 644l-10 11M1644 732l7 7 7-7M1666 730l10 11M1676 730l-10 11"/></g>
<g class="f">
<text x="1484" y="618" textLength="39" lengthAdjust="spacingAndGlyphs">X-axis</text>
<text x="1484" y="655" textLength="88" lengthAdjust="spacingAndGlyphs">Month Name</text>
<text x="1484" y="704" textLength="38" lengthAdjust="spacingAndGlyphs">Y-axis</text>
<text x="1484" y="741" textLength="84" lengthAdjust="spacingAndGlyphs">Sum of Sales</text>
<text x="1484" y="791" textLength="48" lengthAdjust="spacingAndGlyphs">Legend</text>
<text x="1488" y="825" textLength="132" lengthAdjust="spacingAndGlyphs">Add data fields here</text>
<text x="1484" y="866" textLength="100" lengthAdjust="spacingAndGlyphs">Small multiples</text>
<text x="1488" y="900" textLength="132" lengthAdjust="spacingAndGlyphs">Add data fields here</text>
<text x="1484" y="941" textLength="51" lengthAdjust="spacingAndGlyphs">Tooltips</text>
<text x="1488" y="975" textLength="132" lengthAdjust="spacingAndGlyphs">Add data fields here</text>
</g>
<!-- fields pane -->
<rect x="1695.500" y="201.500" width="224.500" height="798.500" fill="#f3f2f1"/>
<text x="1705" y="232" font-size="19" fill="#252423" stroke="#252423" stroke-width=".3" textLength="52" lengthAdjust="spacingAndGlyphs">Fields</text>
<path d="M1895 218l7 7-7 7M1903 218l7 7-7 7" fill="none" stroke="#333" stroke-width="1.400"/>
<rect x="1700.500" y="257.500" width="214" height="32" rx="2" fill="#fff" stroke="#6a6a6a"/>
<circle cx="1721" cy="272" r="6" fill="none" stroke="#333" stroke-width="1.200"/><path d="M1716 277l-6 6" stroke="#333" stroke-width="1.200"/>
<text x="1737" y="280" font-size="17.500" fill="#555" textLength="50" lengthAdjust="spacingAndGlyphs">Search</text>
<path d="M1704 312l7 7 7-7" fill="none" stroke="#666" stroke-width="1.200"/>
<rect x="1723" y="310" width="15" height="13" fill="#f3f2f1" stroke="#444"/><path d="M1723 312h15" stroke="#444" stroke-width="2"/><path d="M1723 316.500h15M1728 310v13M1733 310v13" stroke="#777" stroke-width=".8"/>
<circle cx="1738" cy="324" r="7" fill="#f2c811"/><path d="M1735 324l2 2 4-4" fill="none" stroke="#222" stroke-width="1.300"/>
<text class="f" x="1747" y="322" textLength="60" lengthAdjust="spacingAndGlyphs">financials</text>
<!-- checkboxes -->
<g class="cb">
<rect x="1743.500" y="339.500" width="14" height="14" rx="2" style="fill:#f2c811;stroke:#f2c811"/>
<rect x="1743.500" y="369.500" width="14" height="14" rx="2"/><rect x="1743.500" y="399.500" width="14" height="14" rx="2"/><rect x="1743.500" y="429.500" width="14" height="14" rx="2"/><rect x="1743.500" y="459.500" width="14" height="14" rx="2"/><rect x="1743.500" y="489.500" width="14" height="14" rx="2"/><rect x="1743.500" y="519.500" width="14" height="14" rx="2"/><rect x="1743.500" y="549.500" width="14" height="14" rx="2"/>
<rect x="1743.500" y="579.500" width="14" height="14" rx="2" style="fill:#f2c811;stroke:#f2c811"/>
<rect x="1743.500" y="609.500" width="14" height="14" rx="2"/><rect x="1743.500" y="639.500" width="14" height="14" rx="2"/><rect x="1743.500" y="669.500" width="14" height="14" rx="2"/><rect x="1743.500" y="699.500" width="14" height="14" rx="2"/><rect x="1743.500" y="729.500" width="14" height="14" rx="2"/><rect x="1743.500" y="759.500" width="14" height="14" rx="2"/><rect x="1743.500" y="789.500" width="14" height="14" rx="2"/>
</g>
<path d="M1746 347l3 3 6-6M1746 587l3 3 6-6" fill="none" stroke="#7a6a20" stroke-width="1.100"/>
<!-- sigma icons -->
<g fill="none" stroke="#444" stroke-width="1.200">
<path d="M1781 339h-12l6 8-6 8h12M1781 369h-12l6 8-6 8h12M1781 489h-12l6 8-6 8h12M1781 519h-12l6 8-6 8h12M1781 549h-12l6 8-6 8h12M1781 609h-12l6 8-6 8h12M1781 669h-12l6 8-6 8h12M1781 699h-12l6 8-6 8h12M1781 759h-12l6 8-6 8h12M1781 789h-12l6 8-6 8h12"/>
</g>
<path d="M1727 430l6 7-6 7" fill="none" stroke="#666" stroke-width="1.200"/>
<rect x="1765.500" y="428" width="19" height="17" fill="#f3f2f1" stroke="#555" stroke-width="1.100"/><path d="M1765 431.500h20" stroke="#555" stroke-width="1.500"/><path d="M1769 436h12M1769 439h12M1769 442h12" stroke="#777" stroke-dasharray="1.500 1" stroke-width="1"/>
<g class="f">
<text x="1790" y="352" textLength="33" lengthAdjust="spacingAndGlyphs">Sales</text>
<text x="1790" y="382" textLength="38" lengthAdjust="spacingAndGlyphs">COGS</text>
<text x="1790" y="412" textLength="52" lengthAdjust="spacingAndGlyphs">Country</text>
<text x="1790" y="442" textLength="31" lengthAdjust="spacingAndGlyphs">Date</text>
<text x="1790" y="472" textLength="95" lengthAdjust="spacingAndGlyphs">Discount Band</text>
<text x="1790" y="502" textLength="64" lengthAdjust="spacingAndGlyphs">Discounts</text>
<text x="1790" y="532" textLength="74" lengthAdjust="spacingAndGlyphs">Gross Sales</text>
<text x="1790" y="562" textLength="120" lengthAdjust="spacingAndGlyphs">Manufacturing P...</text>
<text x="1790" y="592" textLength="88" lengthAdjust="spacingAndGlyphs">Month Name</text>
<text x="1790" y="622" textLength="103" lengthAdjust="spacingAndGlyphs">Month Number</text>
<text x="1790" y="652" textLength="52" lengthAdjust="spacingAndGlyphs">Product</text>
<text x="1790" y="682" textLength="36" lengthAdjust="spacingAndGlyphs">Profit</text>
<text x="1790" y="712" textLength="63" lengthAdjust="spacingAndGlyphs">Sale Price</text>
<text x="1790" y="742" textLength="59" lengthAdjust="spacingAndGlyphs">Segment</text>
<text x="1790" y="772" textLength="67" lengthAdjust="spacingAndGlyphs">Units Sold</text>
<text x="1790" y="802" textLength="28" lengthAdjust="spacingAndGlyphs">Year</text>
</g>
</svg>
</body></html>
